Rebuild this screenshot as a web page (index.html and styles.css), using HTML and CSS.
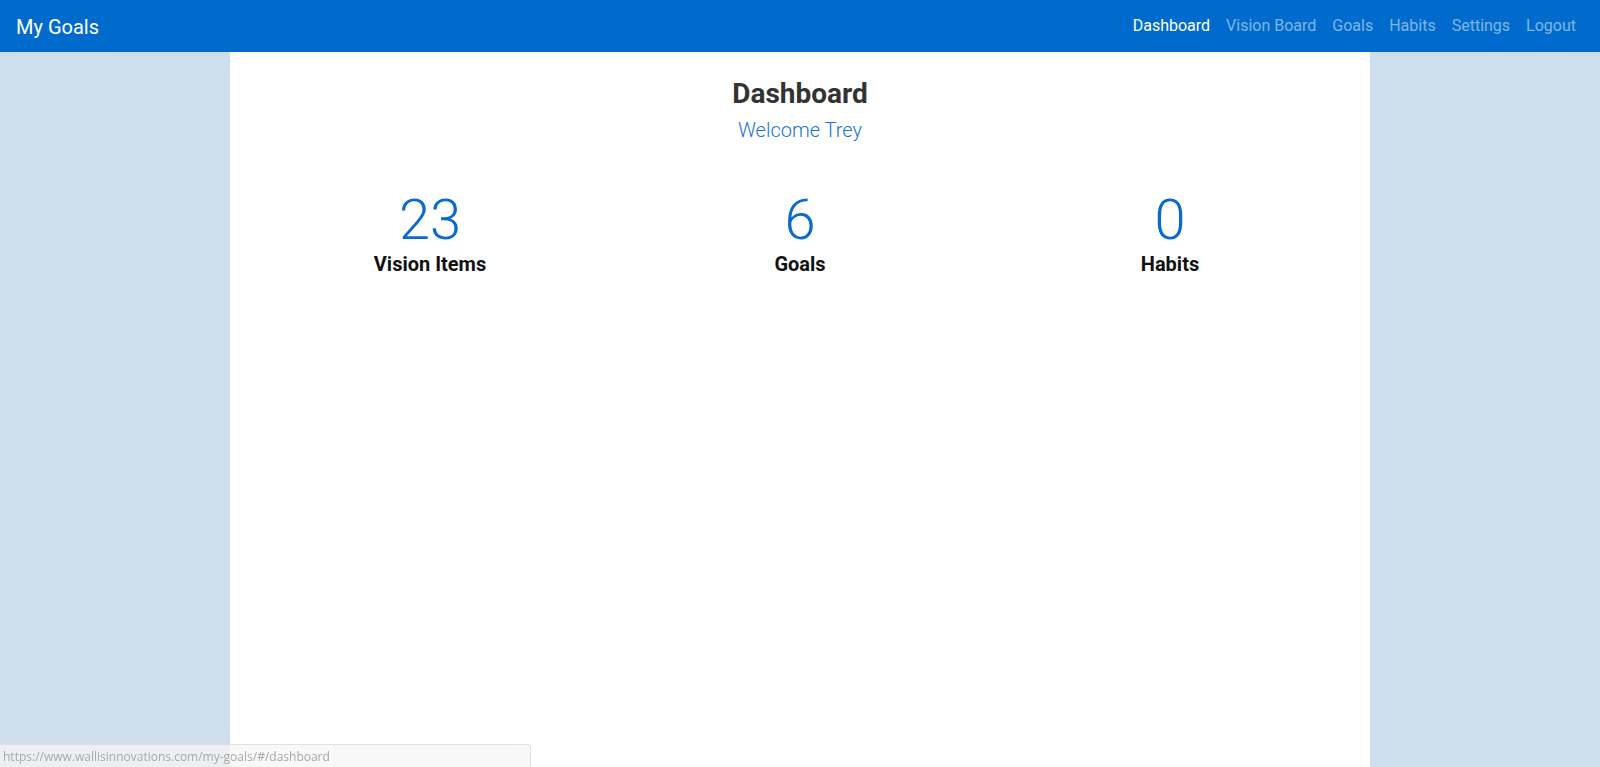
FILE: index.html
```html
<!DOCTYPE html>
<html lang="en">
<head>
<meta charset="utf-8">
<title>My Goals</title>
<link rel="stylesheet" href="styles.css">
</head>
<body>
<nav class="navbar">
  <a class="brand" href="#">My Goals</a>
  <ul class="nav">
    <li><a class="nav-link active" href="#">Dashboard</a></li>
    <li><a class="nav-link" href="#">Vision Board</a></li>
    <li><a class="nav-link" href="#">Goals</a></li>
    <li><a class="nav-link" href="#">Habits</a></li>
    <li><a class="nav-link" href="#">Settings</a></li>
    <li><a class="nav-link" href="#">Logout</a></li>
  </ul>
</nav>
<main class="container">
  <header class="page-head">
    <h1 class="title">Dashboard</h1>
    <p class="welcome">Welcome Trey</p>
  </header>
  <section class="stats">
    <div class="stat">
      <div class="stat-num">23</div>
      <div class="stat-label">Vision Items</div>
    </div>
    <div class="stat">
      <div class="stat-num">6</div>
      <div class="stat-label">Goals</div>
    </div>
    <div class="stat">
      <div class="stat-num">0</div>
      <div class="stat-label">Habits</div>
    </div>
  </section>
</main>
<div class="status-bubble">https://www.wallisinnovations.com/my-goals/#/dashboard</div>
</body>
</html>
```

FILE: styles.css
```css
* { box-sizing: border-box; }
html, body { height: 100%; }
body {
  margin: 0;
  background: #cfdeec;
  font-family: Roboto, "Liberation Sans", sans-serif;
  display: flex;
  flex-direction: column;
  overflow: hidden;
}
.navbar {
  height: 52px;
  flex: none;
  background: #006bcc;
  display: flex;
  align-items: center;
  justify-content: space-between;
  padding: 0 16px;
}
.brand {
  color: #fff;
  font-size: 20px;
  text-decoration: none;
  line-height: 1;
  padding-top: 1px;
}
.nav {
  list-style: none;
  margin: 0;
  padding: 0;
  display: flex;
}
.nav-link {
  display: block;
  padding: 0 8px;
  font-size: 16px;
  color: rgba(255,255,255,0.5);
  text-decoration: none;
  line-height: 1;
}
.nav-link.active { color: #fff; }
.container {
  flex: 1;
  width: 1140px;
  margin: 0 auto;
  background: #fff;
  padding: 0 15px;
}
.page-head {
  text-align: center;
  padding-top: 26px;
}
.title {
  margin: 0;
  font-size: 28px;
  font-weight: 700;
  color: #333;
  line-height: 32px;
}
.welcome {
  margin: 8px 0 0;
  font-size: 20px;
  font-weight: 300;
  color: #1a73d9;
  line-height: 24px;
}
.stats {
  display: grid;
  grid-template-columns: repeat(3, 1fr);
  margin-top: 46px;
  text-align: center;
}
.stat-num {
  font-size: 56px;
  font-weight: 300;
  color: #0b6bcc;
  line-height: 64px;
}
.stat-label {
  font-size: 20px;
  font-weight: 700;
  color: #111;
  line-height: 24px;
}
.status-bubble {
  position: fixed;
  left: 0;
  bottom: 0;
  width: 531px;
  height: 23px;
  padding: 3px 3px 0;
  background: rgba(246,246,246,0.75);
  border: 1px solid rgba(220,220,220,0.8);
  border-left: none;
  border-bottom: none;
  border-top-right-radius: 3px;
  font-family: "Open Sans", "Liberation Sans", sans-serif;
  font-size: 12px;
  color: #a8a8a8;
  line-height: 18px;
  white-space: nowrap;
}
```
